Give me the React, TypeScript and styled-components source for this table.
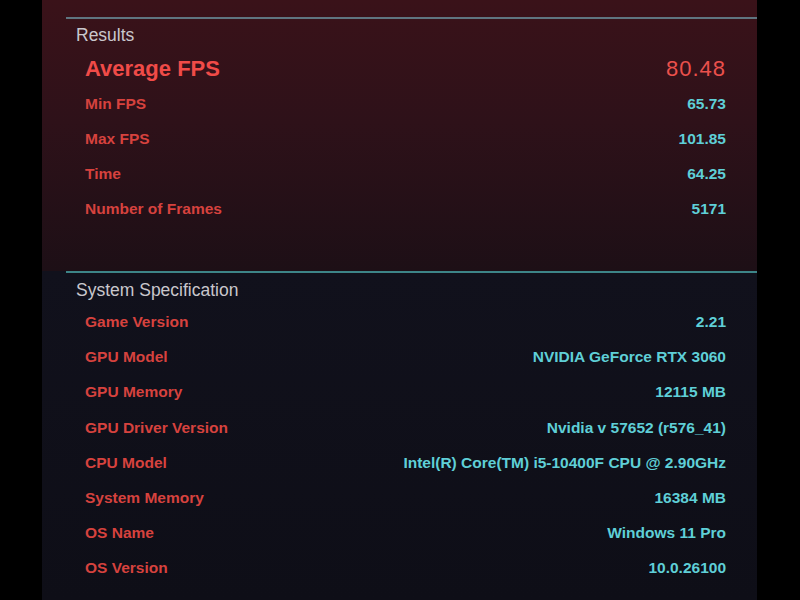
import React from "react";
import styled, { createGlobalStyle } from "styled-components";

const Global = createGlobalStyle`
  html, body { margin: 0; padding: 0; background: #000; }
  body { font-family: "Liberation Sans", Arial, sans-serif; }
`;

const Page = styled.div`
  width: 800px;
  height: 600px;
  background: #000;
  display: flex;
  overflow: hidden;
`;

const Panel = styled.div`
  margin-left: 42px;
  width: 715px;
  height: 600px;
  display: flex;
  flex-direction: column;
  background: #0f0f19;
`;

const Section = styled.section<{ $variant: "results" | "spec" }>`
  display: flex;
  flex-direction: column;
  padding-top: ${(p) => (p.$variant === "results" ? "17px" : "0")};
  padding-bottom: ${(p) => (p.$variant === "results" ? "44px" : "0")};
  background: ${(p) =>
    p.$variant === "results"
      ? "linear-gradient(180deg, #3a1219 0%, #2e1119 45%, #1d0f16 100%)"
      : "linear-gradient(180deg, #11111c 0%, #0e0e17 100%)"};
  flex: ${(p) => (p.$variant === "spec" ? "1" : "none")};
`;

const Divider = styled.div<{ $color: string }>`
  height: 2px;
  margin-left: 24px;
  background: ${(p) => p.$color};
`;

const Title = styled.div<{ $top: number; $bottom: number }>`
  height: 24px;
  line-height: 24px;
  margin-top: ${(p) => p.$top}px;
  margin-bottom: ${(p) => p.$bottom}px;
  padding-left: 34px;
  color: #c9c7cc;
  font-size: 17.5px;
`;

const Row = styled.div<{ $big?: boolean }>`
  height: ${(p) => (p.$big ? 34 : 35.15)}px;
  margin-top: ${(p) => (p.$big ? 5 : 0)}px;
  padding: 0 31px 0 43px;
  display: flex;
  align-items: center;
  justify-content: space-between;
`;

const Label = styled.span<{ $big?: boolean }>`
  color: ${(p) => (p.$big ? "#f04b48" : "#d6423e")};
  font-size: ${(p) => (p.$big ? 22 : 15.5)}px;
  font-weight: bold;
`;

const Value = styled.span<{ $big?: boolean }>`
  color: ${(p) => (p.$big ? "#ea504c" : "#5fcfd7")};
  font-size: ${(p) => (p.$big ? 22 : 15.5)}px;
  font-weight: ${(p) => (p.$big ? "normal" : "bold")};
  letter-spacing: ${(p) => (p.$big ? "1px" : "0")};
`;

const results: [string, string][] = [
  ["Min FPS", "65.73"],
  ["Max FPS", "101.85"],
  ["Time", "64.25"],
  ["Number of Frames", "5171"],
];

const specs: [string, string][] = [
  ["Game Version", "2.21"],
  ["GPU Model", "NVIDIA GeForce RTX 3060"],
  ["GPU Memory", "12115 MB"],
  ["GPU Driver Version", "Nvidia v 57652 (r576_41)"],
  ["CPU Model", "Intel(R) Core(TM) i5-10400F CPU @ 2.90GHz"],
  ["System Memory", "16384 MB"],
  ["OS Name", "Windows 11 Pro"],
  ["OS Version", "10.0.26100"],
];

export default function App() {
  return (
    <Page>
      <Global />
      <Panel>
        <Section $variant="results">
          <Divider $color="#5f7580" />
          <Title $top={4} $bottom={0}>Results</Title>
          <Row $big>
            <Label $big>Average FPS</Label>
            <Value $big>80.48</Value>
          </Row>
          {results.map(([k, v]) => (
            <Row key={k}>
              <Label>{k}</Label>
              <Value>{v}</Value>
            </Row>
          ))}
        </Section>
        <Section $variant="spec">
          <Divider $color="#3d8588" />
          <Title $top={5} $bottom={3}>System Specification</Title>
          {specs.map(([k, v]) => (
            <Row key={k}>
              <Label>{k}</Label>
              <Value>{v}</Value>
            </Row>
          ))}
        </Section>
      </Panel>
    </Page>
  );
}
